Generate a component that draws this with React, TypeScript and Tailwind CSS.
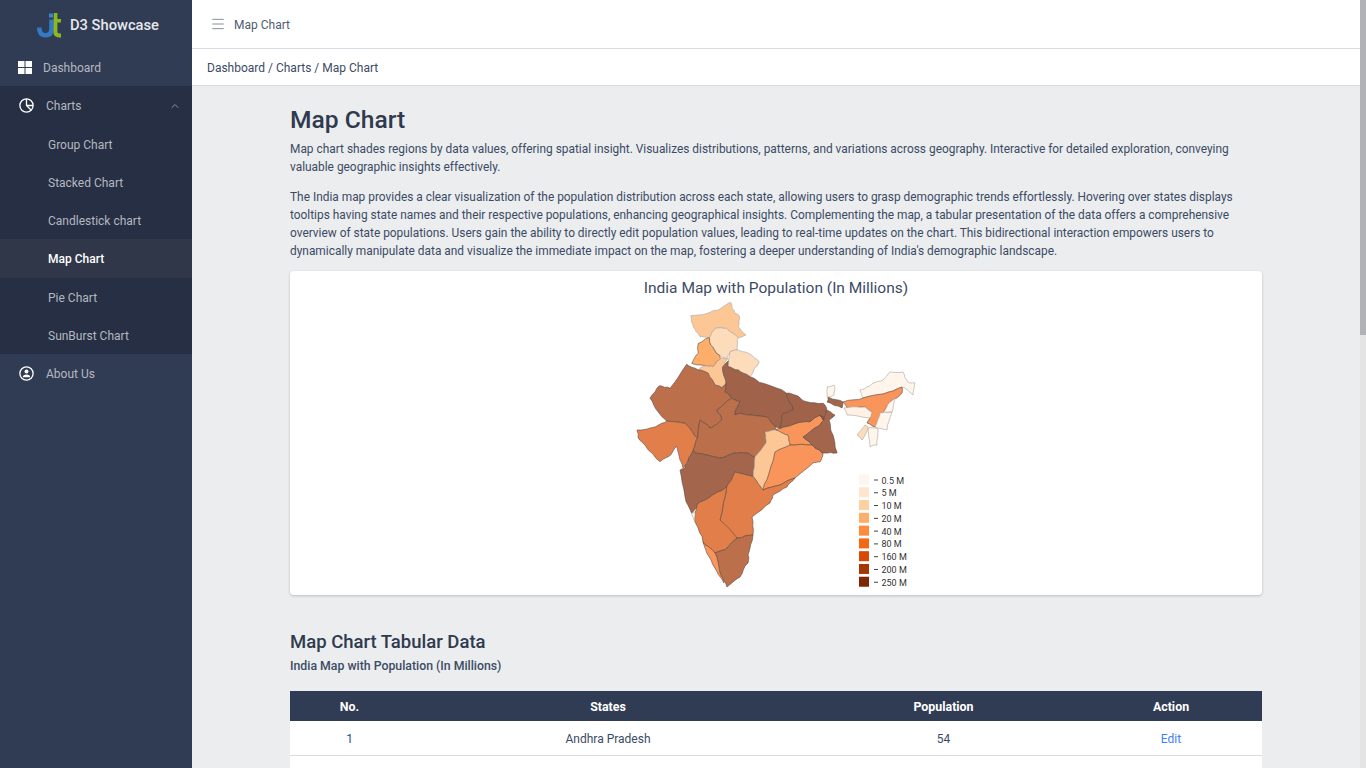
import { ChevronUp, Menu } from "lucide-react";

const FONT = "font-['Roboto','Open_Sans',sans-serif]";

type State = { points: string; fill: string };

const STATES: State[] = [
  // J&K
  { fill: "#fdc795", points: "690.7,315.7 707.3,313.3 720,309 730.7,302.3 735,313.3 739.3,315.7 738.3,326.7 746,335 738.3,337.7 726.7,328.3 715,328.3 709.3,337.7 700,336.7 693.3,326.7" },
  // Himachal
  { fill: "#fddcbc", points: "715,328.3 726.7,328.3 738.3,337.7 737.3,350 730,351.7 727.3,359 719.3,355 710.7,345 709.3,337.7" },
  // Punjab
  { fill: "#fdae6b", points: "709.3,337.7 710.7,345 719.3,355 720.7,358.3 713.3,366.7 705,365.7 691.7,363.3 698.3,353.3 698.3,343.3" },
  // Uttarakhand
  { fill: "#fddcbc", points: "730,351.7 737.3,350 748.3,353.3 759.3,361.7 750,376.7 738.3,370 728.3,366.7" },
  // Haryana
  { fill: "#fdc795", points: "720.7,358.3 727.3,359 722.7,366.7 726,383.3 721.7,387.7 715,385 708.3,373.3 698.3,370 705,365.7 713.3,366.7" },
  // Rajasthan
  { fill: "#bb6f4a", points: "686.7,364.3 698.3,370 708.3,373.3 715,385 721.7,387.7 726,383.3 725,391.7 731.7,398.3 716.7,410 721.7,420 710,428.3 700,420 697.3,438.3 685,423.3 666.7,421 658,411.7 650,398.3 659.3,385.7 670,388.3" },
  // UP
  { fill: "#a0634a", points: "722.7,366.7 728.3,361 728.3,366.7 738.3,370 750,376.7 763.3,383.3 786.7,393.3 793.3,410 783.3,413.3 780,428.3 775,426.7 766.7,416.7 740,413.3 735,415 740,401.7 731.7,398.3 725,391.7 726,383.3" },
  // Gujarat
  { fill: "#e27e49", points: "637,430 655,427 666.7,421 685,423.3 697.3,438.3 693.3,450 688,461 683.3,468.3 680,460 676.7,446 668.3,456.7 660,461.7 645,445 638,437" },
  // MP
  { fill: "#bb6f4a", points: "697.3,438.3 700,420 710,428.3 721.7,420 716.7,410 731.7,398.3 740,401.7 735,415 740,413.3 766.7,416.7 775,426.7 776,430 765,432 766,443 755,456.7 745,453 735,453 720,458 695,453 693.3,450" },
  // Maharashtra
  { fill: "#a3664c", points: "693.3,450 695,453 720,458 735,453 745,453 755,456.7 753.3,476.7 735,472 726.7,486.7 708.3,498.3 698.3,503.3 691.7,513.3 685,496.7 680,470 685,468.3 688,461" },
  // Chhattisgarh
  { fill: "#fdc795", points: "765,432 776,430 788,435 790,445 775,452 770,470 763,490 753.3,476.7 755,456.7 766,443" },
  // Jharkhand
  { fill: "#f9955a", points: "776,430 780,428.3 783,427 797,423 810,421.7 820,415 825,418 817,427 803,437 812,445 790,445 788,435" },
  // Odisha
  { fill: "#f9955a", points: "790,445 812,445 815,448 823,453 820,462 813,463 795,478 780,485 763,490 770,470 775,452" },
  // Bihar
  { fill: "#a0634a", points: "786.7,393.3 795,395 806.7,401.7 823.3,403.3 826.7,410 823,420 820,415 810,421.7 797,423 783,427 780,428.3 783.3,413.3 793.3,410" },
  // West Bengal
  { fill: "#a3664c", points: "826.7,410 835,415 829,420 833,435 835,445 837,453 823,453 815,448 812,445 803,437 817,427 825,418 820,415 823,420" },
  { fill: "#a3664c", points: "828,397 843,402 842,408 827,402" },
  // Sikkim
  { fill: "#fff5eb", points: "827,387 834,385 834,395 827,397" },
  // Arunachal
  { fill: "#fff5eb", points: "860,390 873,383 883,380 890,372 903,372 908,382 915,383 913,395 902,387 883,394 863,398" },
  // Assam
  { fill: "#f9955a", points: "843,402 863,398 883,394 902,387 902,393 890,402 875,427 867,423 872,412 865,407 847,408" },
  // Meghalaya
  { fill: "#fff1e4", points: "844,408 865,407 872,412 870,418 847,415" },
  // Nagaland
  { fill: "#fff5eb", points: "890,402 895,398 892,412 883,413" },
  // Manipur
  { fill: "#fff5eb", points: "880,413 892,412 887,430 875,427" },
  // Mizoram
  { fill: "#fff5eb", points: "868,428 878,429 877,445 870,447" },
  // Tripura
  { fill: "#fddcbc", points: "865,425 868,427 862,440 857,435" },
  // Andhra
  { fill: "#e27e49", points: "735,472 753.3,476.7 763,490 780,485 795,478 787,487 773,495 770,503 752,517 753,535 737,538 725,527 720,520 726.7,486.7" },
  // Karnataka
  { fill: "#e27e49", points: "726.7,486.7 720,520 737,538 727,548 715,553 703,542 695,522 695,512 698.3,503.3 708.3,498.3" },
  // Tamil Nadu
  { fill: "#bb6f4a", points: "737,538 753,535 748,555 748,563 740,577 727,587 720,573 715,553 727,548" },
  // Kerala
  { fill: "#f9955a", points: "703,542 715,553 720,573 724,583 713,565" },
  // Goa
  { fill: "#fff5eb", points: "691.7,513.3 695,512 695,522" },
];

const LIGHT = ["#fff5eb", "#fff1e4", "#fddcbc", "#fdc795"];

const LEGEND = [
  ["#fff5eb", "0.5 M"],
  ["#fee6ce", "5 M"],
  ["#fdd0a2", "10 M"],
  ["#fdae6b", "20 M"],
  ["#fd8d3c", "40 M"],
  ["#f16913", "80 M"],
  ["#d94801", "160 M"],
  ["#a63603", "200 M"],
  ["#7f2704", "250 M"],
];

const SUB_ITEMS = ["Group Chart", "Stacked Chart", "Candlestick chart", "Map Chart", "Pie Chart", "SunBurst Chart"];

// border wobble keyed on the midpoint, so two states sharing an edge get the same line
function wobble(x: number, y: number) {
  const h = Math.sin(x * 12.9898 + y * 78.233) * 43758.5453;
  return h - Math.floor(h) - 0.5;
}

function roughen(points: string) {
  let pts = points.split(" ").map((p) => p.split(",").map(Number));
  for (let round = 0; round < 2; round++) {
    const next: number[][] = [];
    pts.forEach((a, i) => {
      const b = pts[(i + 1) % pts.length];
      const mx = (a[0] + b[0]) / 2;
      const my = (a[1] + b[1]) / 2;
      const len = Math.hypot(a[0] - b[0], a[1] - b[1]);
      const amp = Math.min(len * 0.22, 1.6);
      next.push(a);
      next.push([mx + wobble(mx, my) * amp, my + wobble(my, mx) * amp]);
    });
    pts = next;
  }
  return pts.map((p) => `${p[0].toFixed(1)},${p[1].toFixed(1)}`).join(" ");
}

function Logo() {
  return (
    <svg width="26" height="26" viewBox="0 0 26 26" className="shrink-0">
      <path d="M13 1.500h4v4h-4z" fill="#3a83cf" />
      <path d="M1 15.500h4.500c0 3.500 1.300 5.500 4 5.500 2.700 0 3.700-1.600 3.700-4.500V7.500h4.600V17c0 5.700-3 8.500-8.200 8.500C4 25.500 1 22 1 15.500z" fill="#3379c6" />
      <path d="M17.800 1h3.600v6h3.600v3.500h-3.600v9c0 1.500.8 2 3.600 2v4c-5.200 0-7.600-1.500-7.600-5.500z" fill="#8cb81f" />
    </svg>
  );
}

function Sidebar() {
  return (
    <aside className="flex h-full w-[192px] shrink-0 flex-col bg-[#303c54] text-[12px] text-[#b4b8c0]">
      <div className="flex h-[49px] items-center gap-[8px] pl-[36px] text-[14.700px] font-medium text-[#e6e8eb]">
        <Logo />
        <span className="pt-[2px]">D3 Showcase</span>
      </div>
      <div className="flex h-[37px] items-center gap-[11px] pl-[18px]">
        <svg width="14" height="13" viewBox="0 0 14 13" fill="#fff">
          <rect width="6.500" height="6" />
          <rect x="7.500" width="6.500" height="6" />
          <rect y="7" width="6.500" height="6" />
          <rect x="7.500" y="7" width="6.500" height="6" />
        </svg>
        <span>Dashboard</span>
      </div>
      <div className="bg-[#262f43]">
        <div className="flex h-[39px] items-center gap-[12px] pl-[19px] pr-[11px]">
          <svg width="15" height="15" viewBox="0 0 15 15" fill="none" stroke="#fff" strokeWidth="1.300">
            <circle cx="7.500" cy="7.500" r="6.600" />
            <path d="M7.500 1v6.500l4.500 4.500M7.500 7.500H14" />
          </svg>
          <span className="flex-1">Charts</span>
          <ChevronUp size={12} className="text-[#8a919e]" />
        </div>
        {SUB_ITEMS.map((item) =>
          item === "Map Chart" ? (
            <div key={item} className="flex h-[39px] items-center bg-[#2f3749] pl-[48px] font-medium text-white">
              {item}
            </div>
          ) : (
            <div key={item} className="flex h-[38px] items-center pl-[48px] pt-[2px]">
              {item}
            </div>
          ),
        )}
      </div>
      <div className="flex h-[38px] items-center gap-[12px] pl-[19px]">
        <svg width="15" height="15" viewBox="0 0 15 15" fill="none" stroke="#fff" strokeWidth="1.300">
          <circle cx="7.500" cy="7.500" r="6.600" />
          <circle cx="7.500" cy="5.600" r="2" fill="#fff" stroke="none" />
          <path d="M3.800 11.300c0-1.900 1.500-2.700 3.700-2.700s3.700.8 3.700 2.700z" fill="#fff" stroke="none" />
        </svg>
        <span className="pt-[2px]">About Us</span>
      </div>
    </aside>
  );
}

function MapCard() {
  return (
    <div className="mt-[11px] flex h-[324px] flex-col items-center rounded-[4px] bg-white shadow-[0_1px_3px_rgba(0,0,0,0.2)]">
      <h3 className="pt-[7px] text-[15.500px] font-normal leading-[20px] text-[#3c4b64]">
        India Map with Population (In Millions)
      </h3>
      <svg width="310" height="297" viewBox="620 298 310 297" className="ml-[-2px]">
        {STATES.map((s, i) => (
          <polygon key={i} points={roughen(s.points)} fill={s.fill} stroke={LIGHT.includes(s.fill) ? "#a9a49f" : "#5c4a42"} strokeWidth="0.600" strokeLinejoin="round" />
        ))}
        {LEGEND.map(([color, label], i) => (
          <g key={label} transform={`translate(859 ${474.500 + i * 12.780})`}>
            <rect width="10" height="10" fill={color} />
            <line x1="15" x2="19" y1="5.500" y2="5.500" stroke="#444" strokeWidth="1" />
            <text x="22.500" y="9" fontSize="9" fill="#333">
              {label}
            </text>
          </g>
        ))}
      </svg>
    </div>
  );
}

export default function App() {
  return (
    <div className={`${FONT} relative flex h-screen w-full overflow-hidden bg-[#ebedef] text-[#3c4b64]`}>
      <Sidebar />
      <div className="flex h-full min-w-0 flex-1 flex-col">
        <header className="flex h-[49px] shrink-0 items-center gap-[8px] border-b border-[#d8dbe0] bg-white pl-[18px] text-[12px] text-[#4f5d73]">
          <Menu size={16} strokeWidth={1.200} className="text-[#6b7280]" />
          <span className="pt-[2px]">Map Chart</span>
        </header>
        <div className="flex h-[37px] shrink-0 items-center border-b border-[#d8dbe0] bg-white pl-[15px] pt-[2px] text-[12px] text-[#3c4b64]">
          Dashboard / Charts / Map Chart
        </div>
        <main className="relative min-h-0 flex-1 overflow-hidden pr-[6px]">
          <div className="mx-auto w-[972px]">
            <h1 className="pt-[19px] text-[24.600px] font-medium leading-[30px] text-[#2f3a4e]">Map Chart</h1>
            <p className="mt-[5px] text-[11.900px] leading-[18px]">
              Map chart shades regions by data values, offering spatial insight. Visualizes distributions, patterns, and variations across geography. Interactive for detailed exploration, conveying valuable geographic insights effectively.
            </p>
            <p className="mt-[12px] text-[11.900px] leading-[18px]">
              The India map provides a clear visualization of the population distribution across each state, allowing users to grasp demographic trends effortlessly. Hovering over states displays tooltips having state names and their respective populations, enhancing geographical insights. Complementing the map, a tabular presentation of the data offers a comprehensive overview of state populations. Users gain the ability to directly edit population values, leading to real-time updates on the chart. This bidirectional interaction empowers users to dynamically manipulate data and visualize the immediate impact on the map, fostering a deeper understanding of India's demographic landscape.
            </p>
            <MapCard />
            <h2 className="mt-[34px] text-[18.500px] font-medium leading-[26px] text-[#2f3a4e]">Map Chart Tabular Data</h2>
            <p className="mt-[2px] text-[12.300px] font-medium leading-[18px]">India Map with Population (In Millions)</p>
            <table className="mt-[16px] w-full table-fixed border-collapse text-[12px]">
              <thead>
                <tr className="h-[30px] bg-[#303c54] text-[12.400px] text-white">
                  <th className="w-[119px] pt-[2px] font-bold">No.</th>
                  <th className="w-[398px] pt-[2px] font-bold">States</th>
                  <th className="w-[273px] pt-[2px] font-bold">Population</th>
                  <th className="pt-[2px] font-bold">Action</th>
                </tr>
              </thead>
              <tbody>
                <tr className="h-[34px] border-b border-[#d8dbe0] bg-white text-center">
                  <td className="pt-[2px] text-[#2f4a8a]">1</td>
                  <td className="pt-[2px]">Andhra Pradesh</td>
                  <td className="pt-[2px]">54</td>
                  <td className="pt-[2px] text-[#3b82f6]">Edit</td>
                </tr>
                <tr className="h-[34px] bg-white">
                  <td colSpan={4} />
                </tr>
              </tbody>
            </table>
          </div>
          <div className="absolute inset-y-0 right-0 w-[6px] bg-[#e4e4e4]" />
        </main>
      </div>
      {/* scrollbar thumb runs over the header rows too */}
      <div className="absolute right-0 top-0 h-[335px] w-[6px] bg-[#b0b2b5]" />
    </div>
  );
}
